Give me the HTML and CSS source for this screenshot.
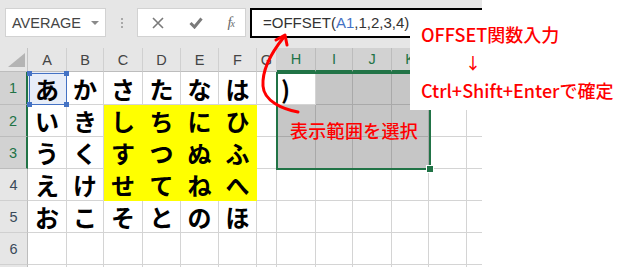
FILE: index.html
```html
<!DOCTYPE html>
<html lang="ja">
<head>
  <meta charset="UTF-8">
  <title>OFFSET関数 配列入力</title>
  <link rel="stylesheet" href="styles.css">
</head>
<body>

  <div class="screen">
    <div class="toolbar">
      <div class="namebox">
        <span>AVERAGE</span>
        <span class="drop"></span>
      </div>
      <div class="grip"><i></i><i></i><i></i></div>
      <div class="fxbox">
        <svg width="14" height="14" viewBox="0 0 14 14">
          <path d="M2 2 L12 12 M12 2 L2 12" stroke="#7a7a7a" stroke-width="1.6" fill="none"/>
        </svg>
        <svg width="14" height="12" viewBox="0 0 14 12">
          <path d="M1.5 6 L5.5 10 L12.5 1.5" stroke="#7a7a7a" stroke-width="3" fill="none"/>
        </svg>
        <span class="fx">f<sub>x</sub></span>
      </div>
      <div class="formula">=OFFSET(<span class="ref">A1</span>,1,2,3,4)</div>
    </div>

    <div class="sheet" id="sheet"></div>

    <div class="refbox">
      <i class="tl"></i><i class="tr"></i><i class="bl"></i><i class="br"></i>
    </div>
    <div class="selection"><i class="handle"></i></div>
    <div class="pick">表示範囲を選択</div>
  </div>

  <div class="note">
    <p>OFFSET関数入力</p>
    <p class="down">↓</p>
    <p>Ctrl+Shift+Enterで確定</p>
  </div>

  <svg class="arrow" width="638" height="267" viewBox="0 0 638 267">
    <path d="M298 112 C 282 109 264 101 263 86 C 262 70 271 53 284 37" stroke="#ff0000" stroke-width="3" fill="none" stroke-linecap="round"/>
    <path d="M276 40 L285 35 L287 45" stroke="#ff0000" stroke-width="3" fill="none" stroke-linecap="round" stroke-linejoin="round"/>
  </svg>

  <script>
    // last column is only partly visible, so it has no letter
    const cols = ["A", "B", "C", "D", "E", "F", "G", "H", "I", "J", "K", "L", ""];
    const data = [
      ["あ", "か", "さ", "た", "な", "は", "", ")"],
      ["い", "き", "し", "ち", "に", "ひ"],
      ["う", "く", "す", "つ", "ぬ", "ふ"],
      ["え", "け", "せ", "て", "ね", "へ"],
      ["お", "こ", "そ", "と", "の", "ほ"],
      [],
      []
    ];
    const sheet = document.getElementById("sheet");

    // Add one cell to the grid
    function addCell(cls, text) {
      const div = document.createElement("div");
      div.className = cls;
      div.textContent = text || "";
      sheet.appendChild(div);
    }

    addCell("corner");
    cols.forEach((c, i) => addCell("colhead" + (i >= 7 && i <= 10 ? " on" : ""), c));

    data.forEach((row, r) => {
      // row 7 is cut off at the bottom edge
      addCell("rowhead" + (r < 3 ? " on" : ""), r < 6 ? r + 1 : "");
      cols.forEach((c, i) => {
        let cls = "cell";
        if (r >= 1 && r <= 3 && i >= 2 && i <= 5) cls += " yellow";
        if (r <= 2 && i >= 7 && i <= 10 && !(r === 0 && i === 7)) cls += " gray";
        if (r === 0 && i === 0) cls += " ref";
        if (r === 0 && i === 7) cls += " active";
        addCell(cls, row[i]);
      });
    });
  </script>
</body>
</html>
```

FILE: styles.css
```css
body {
  margin: 0;
  background-color: #ffffff;
  width: 638px;
  height: 267px;
  overflow: hidden;
  position: relative;
  font-family: "Liberation Sans", Arial, sans-serif;
}

.screen {
  width: 482px;
  height: 267px;
  overflow: hidden;
  position: relative;
  background-color: #ffffff;
}

/* formula bar */
.toolbar {
  height: 48px;
  background-color: #e6e6e6;
  display: flex;
  align-items: flex-start;
  padding-top: 8px;
  box-sizing: border-box;
}

.namebox {
  margin-left: 5px;
  width: 101px;
  height: 29px;
  background-color: #ffffff;
  border: 1px solid #d2d2d2;
  box-sizing: border-box;
  display: flex;
  align-items: center;
  justify-content: space-between;
  padding: 0 6px 0 6px;
  font-size: 14.5px;
  color: #444;
}

.drop {
  width: 0;
  height: 0;
  border-left: 4px solid transparent;
  border-right: 4px solid transparent;
  border-top: 4px solid #8a8a8a;
}

.grip {
  width: 31px;
  height: 29px;
  display: flex;
  flex-direction: column;
  align-items: center;
  justify-content: center;
  gap: 2px;
}

.grip i {
  width: 2px;
  height: 2px;
  background-color: #a8a8a8;
}

.fxbox {
  width: 109px;
  height: 29px;
  background-color: #ffffff;
  border: 1px solid #d2d2d2;
  box-sizing: border-box;
  display: flex;
  align-items: center;
  justify-content: space-between;
  padding: 0 11px 0 13px;
}

.fx {
  font-family: "Liberation Serif", serif;
  font-style: italic;
  font-size: 15px;
  color: #6a6a6a;
  letter-spacing: -1px;
}

.fx sub {
  font-size: 10px;
  vertical-align: 0;
}

.formula {
  margin-left: 4px;
  flex: 1;
  height: 30px;
  border: 2px solid #000;
  border-right: none;
  box-sizing: border-box;
  background-color: #ffffff;
  padding-left: 11px;
  font-size: 15px;
  line-height: 26px;
  color: #333;
  white-space: nowrap;
}

.ref {
  color: #4472c4;
}

/* sheet grid */
.sheet {
  display: grid;
  grid-template-columns: 28px 39px 37px 39px 38px 38px 38px 20px 39px 37px 39px 37px 38px 38px;
  grid-template-rows: 24px 33px 32px 32px 32px 32px 32px 32px;
}

.corner {
  background-color: #e6e6e6;
  border-right: 1px solid #c4c4c4;
  border-bottom: 1px solid #bdbdbd;
  position: relative;
}

.corner::after {
  content: "";
  position: absolute;
  left: 8px;
  top: 5px;
  width: 17px;
  height: 14px;
  background-color: #b4b4b4;
  clip-path: polygon(100% 0, 100% 100%, 0 100%);
}

.colhead {
  background-color: #e6e6e6;
  border-right: 1px solid #d0d0d0;
  border-bottom: 1px solid #bdbdbd;
  display: flex;
  align-items: center;
  justify-content: center;
  font-size: 14.5px;
  color: #444;
}

.colhead.on {
  background-color: #d2d2d2;
  color: #217346;
  border-bottom: 2px solid #217346;
  border-right-color: #bcbcbc;
}

.rowhead {
  background-color: #e6e6e6;
  border-right: 1px solid #bdbdbd;
  border-bottom: 1px solid #d0d0d0;
  display: flex;
  align-items: center;
  justify-content: center;
  font-size: 14.5px;
  color: #3a4a5a;
}

.rowhead.on {
  background-color: #d2d2d2;
  color: #217346;
  border-right: 2px solid #217346;
  border-bottom-color: #bcbcbc;
}

.cell {
  border-right: 1px solid #d4d4d4;
  border-bottom: 1px solid #d4d4d4;
  display: flex;
  align-items: center;
  justify-content: center;
  font-family: "Noto Sans CJK JP", sans-serif;
  font-weight: bold;
  font-size: 24px;
  color: #000;
}

.cell.yellow {
  background-color: #ffff00;
  border-color: #ffff00;
}

.cell.gray {
  background-color: #c6c6c6;
  border-color: #a9a9a9;
}

.cell.ref {
  background-color: #e7edf8;
}

.cell.active {
  justify-content: flex-start;
  padding-left: 4px;
}

/* reference highlight on A1 */
.refbox {
  position: absolute;
  left: 29px;
  top: 73px;
  width: 38px;
  height: 32px;
  border: 1px solid #4472c4;
  box-sizing: border-box;
}

.refbox i {
  position: absolute;
  width: 5px;
  height: 5px;
  background-color: #4472c4;
}

.refbox .tl { left: -3px; top: -3px; }
.refbox .tr { right: -3px; top: -3px; }
.refbox .bl { left: -3px; bottom: -3px; }
.refbox .br { right: -3px; bottom: -3px; }

/* selected range H1:K3 */
.selection {
  position: absolute;
  left: 276px;
  top: 72px;
  width: 155px;
  height: 98px;
  border: 2px solid #217346;
  box-sizing: border-box;
}

.handle {
  position: absolute;
  right: -5px;
  bottom: -5px;
  width: 6px;
  height: 6px;
  background-color: #217346;
  border: 1px solid #ffffff;
}

.pick {
  position: absolute;
  left: 290px;
  top: 117px;
  font-family: "Noto Sans CJK JP", sans-serif;
  font-size: 18px;
  font-weight: 500;
  letter-spacing: 0.3px;
  color: #ff0000;
  line-height: 26px;
}

/* annotation */
.note {
  position: absolute;
  left: 410px;
  top: 15px;
  width: 228px;
  height: 95px;
  background-color: #ffffff;
  padding: 5px 0 0 11px;
  box-sizing: border-box;
  font-family: "Noto Sans CJK JP", sans-serif;
  font-size: 18px;
  font-weight: 500;
  color: #ff0000;
}

.note p {
  margin: 0;
  line-height: 28px;
  white-space: nowrap;
}

.note .down {
  padding-left: 44px;
  font-size: 16px;
}

.arrow {
  position: absolute;
  left: 0;
  top: 0;
}
```
